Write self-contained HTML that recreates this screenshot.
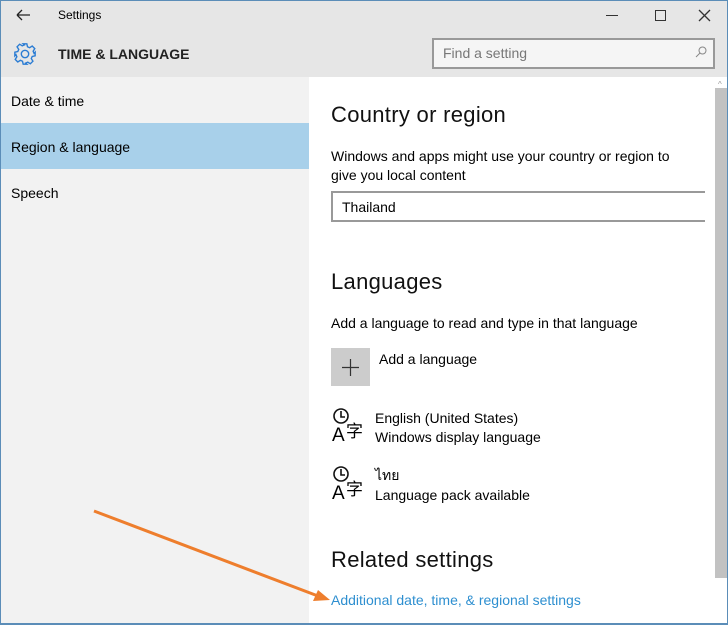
<!DOCTYPE html>
<html><head><style>
*{margin:0;padding:0;box-sizing:border-box}
body{width:728px;height:625px;overflow:hidden;font-family:"Liberation Sans","Noto Sans CJK SC",sans-serif;background:#fff;position:relative;color:#000}
.a{position:absolute}
.t{font-size:14px;white-space:nowrap}
.h{font-size:22px;color:#111;white-space:nowrap;letter-spacing:0.3px}
</style></head><body>
<div class="a" style="left:0;top:0;width:728px;height:77px;background:#e6e6e6"></div>
<div class="a" style="left:0;top:77px;width:309px;height:548px;background:#f2f2f2"></div>
<div class="a" style="left:0;top:123px;width:309px;height:46px;background:#a8d0ea"></div>
<svg class="a" style="left:15px;top:8px" width="16" height="14"><path d="M2 7H15M2 7L7 2M2 7L7 12" stroke="#222" stroke-width="1.3" fill="none"/></svg>
<div class="a" style="left:58px;top:8px;font-size:12px">Settings</div>
<div class="a" style="left:606px;top:15px;width:12px;height:1px;background:#333"></div>
<div class="a" style="left:655px;top:10px;width:11px;height:11px;border:1.3px solid #333"></div>
<svg class="a" style="left:698px;top:9px" width="13" height="13"><path d="M1 1L12 12M12 1L1 12" stroke="#333" stroke-width="1.3"/></svg>
<svg class="a" style="left:13px;top:42px" width="24" height="24" viewBox="0 0 26 26"><g fill="none" stroke="#2b7cd3" stroke-width="1.5"><circle cx="13" cy="13" r="4"/><path d="M11 2h4l.7 3.2 2.3 1 2.8-1.8 2.8 2.8-1.8 2.8 1 2.3L24 11v4l-3.2.7-1 2.3 1.8 2.8-2.8 2.8-2.8-1.8-2.3 1L15 24h-4l-.7-3.2-2.3-1-2.8 1.8-2.8-2.8 1.8-2.8-1-2.3L2 15v-4l3.2-.7 1-2.3-1.8-2.8 2.8-2.8 2.8 1.8 2.3-1z"/></g></svg>
<div class="a" style="left:58px;top:46px;font-size:14px;font-weight:bold;color:#222">TIME &amp; LANGUAGE</div>
<div class="a" style="left:432px;top:38px;width:283px;height:31px;border:2px solid #999;background:#f5f5f5"></div>
<div class="a t" style="left:443px;top:45px;color:#777">Find a setting</div>
<svg class="a" style="left:695px;top:46px" width="12" height="12"><circle cx="7.5" cy="4.5" r="3.5" fill="none" stroke="#888"/><path d="M5 7L1 11" stroke="#888"/></svg>
<div class="a t" style="left:11px;top:93px">Date &amp; time</div>
<div class="a t" style="left:11px;top:139px">Region &amp; language</div>
<div class="a t" style="left:11px;top:185px">Speech</div>
<div class="a" style="left:715px;top:88px;width:12px;height:490px;background:#c2c2c2"></div>
<div class="a" style="left:718px;top:80px;font-size:8px;color:#999">^</div>
<div class="a h" style="left:331px;top:102px">Country or region</div>
<div class="a t" style="left:331px;top:147px;line-height:19px">Windows and apps might use your country or region to<br>give you local content</div>
<div class="a" style="left:331px;top:191px;width:374px;height:31px;border:2px solid #999;border-right:none"></div>
<div class="a t" style="left:342px;top:199px">Thailand</div>
<div class="a h" style="left:331px;top:269px">Languages</div>
<div class="a t" style="left:331px;top:315px">Add a language to read and type in that language</div>
<div class="a" style="left:331px;top:348px;width:39px;height:38px;background:#ccc"></div>
<svg class="a" style="left:342px;top:359px" width="17" height="17"><path d="M8.5 0V17M0 8.5H17" stroke="#333" stroke-width="1.2"/></svg>
<div class="a t" style="left:379px;top:351px">Add a language</div>
<svg class="a" style="left:331px;top:407px" width="36" height="36"><circle cx="10" cy="9" r="7" fill="none" stroke="#111" stroke-width="1.6"/><path d="M10 4V10H14" stroke="#111" stroke-width="1.6" fill="none"/><text x="1" y="34" font-size="19" font-family="Liberation Sans">A</text><text x="15" y="30" font-size="17" font-family="Noto Sans CJK SC">字</text></svg>
<div class="a t" style="left:375px;top:409px;line-height:19px">English (United States)<br>Windows display language</div>
<svg class="a" style="left:331px;top:465px" width="36" height="36"><circle cx="10" cy="9" r="7" fill="none" stroke="#111" stroke-width="1.6"/><path d="M10 4V10H14" stroke="#111" stroke-width="1.6" fill="none"/><text x="1" y="34" font-size="19" font-family="Liberation Sans">A</text><text x="15" y="30" font-size="17" font-family="Noto Sans CJK SC">字</text></svg>
<div class="a t" style="left:375px;top:465px;line-height:20px">ไทย<br>Language pack available</div>
<div class="a h" style="left:331px;top:547px">Related settings</div>
<div class="a t" style="left:331px;top:592px;color:#2e8fd0">Additional date, time, &amp; regional settings</div>
<svg class="a" style="left:0;top:0" width="728" height="625"><path d="M94 511L318 596" stroke="#ee7e2d" stroke-width="3"/><path d="M330 600L313 601L318 590Z" fill="#ee7e2d"/></svg>
<div class="a" style="left:0;top:0;width:728px;height:625px;border:1px solid #5b8db8;border-bottom-width:2px"></div>
</body></html>
